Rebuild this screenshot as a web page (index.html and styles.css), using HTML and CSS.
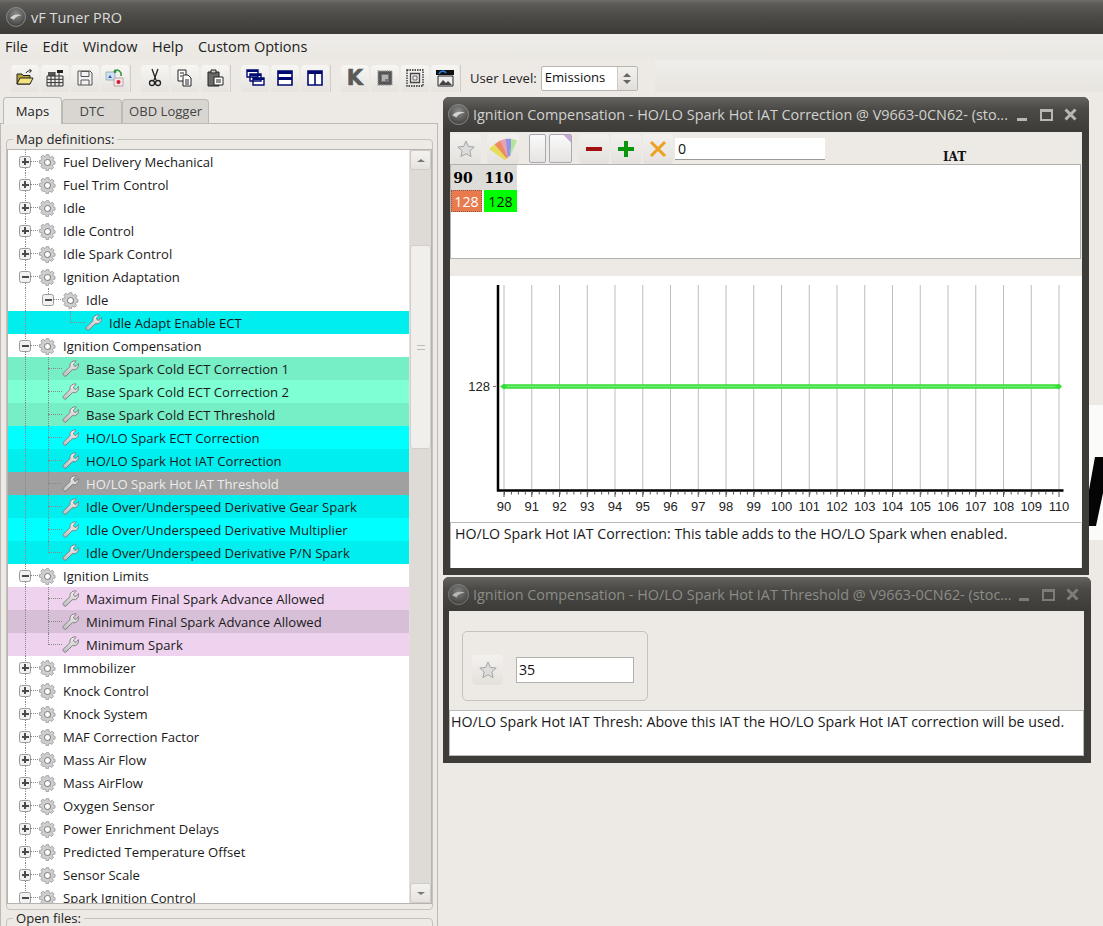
FILE: index.html
```html
<!DOCTYPE html>
<html lang="en">
<head>
<meta charset="utf-8">
<title>vF Tuner PRO</title>
<link rel="stylesheet" href="styles.css">
</head>
<body>
<svg class="defs" width="0" height="0" aria-hidden="true">
  <defs>
    <radialGradient id="lg" cx="50%" cy="35%" r="70%"><stop offset="0" stop-color="#8d8d8b"/><stop offset="1" stop-color="#3a3a38"/></radialGradient>
    <linearGradient id="wg" x1="0" y1="0" x2="0" y2="1"><stop offset="0" stop-color="#f2f2f2"/><stop offset="1" stop-color="#bdbdbd"/></linearGradient>
    <symbol id="logo" viewBox="0 0 20 20"><circle cx="10" cy="10" r="9.5" fill="url(#lg)" stroke="#9a9a98" stroke-width=".8"/><path d="M4 11 C7 7 12 7 16 8 C12 9 9 10 8 13 C7 12 5 11 4 11Z" fill="#d4d4d2"/></symbol>
    <symbol id="gear" viewBox="0 0 18 18"><path d="M7.6 1h2.8l.4 2.2 1.3.6 1.9-1.2 2 2-1.2 1.9.6 1.3L17 8.2v2.8l-2.2.4-.6 1.3 1.2 1.9-2 2-1.9-1.2-1.3.6-.4 2.2H7.6l-.4-2.2-1.3-.6L4 15.6l-2-2 1.2-1.9-.6-1.3L.4 10V7.2l2.2-.4.6-1.3L2 3.6l2-2 1.9 1.2 1.3-.6z" transform="translate(0 -.3)" fill="#cfcfcf" stroke="#949494" stroke-width=".8"/><circle cx="9" cy="9" r="3.2" fill="#fff" stroke="#8c8c8c" stroke-width="1.2"/></symbol>
    <symbol id="wrench" viewBox="0 0 17 17"><path d="M1.2 13.2 8 6.7C7.5 4 9 1.6 11.8 1c.9-.2 1.8-.1 2.5.2L11.400 4l.8 1.900 1.900.5 2.400-2.900c.5 2.500-.5 5-2.900 6-1 .4-2.100.4-3.100.1l-6.500 6.400c-1.200 1.100-3.800-1.400-2.800-2.800z" fill="url(#wg)" stroke="#7b7b7b" stroke-width=".9"/></symbol>
    <symbol id="star" viewBox="0 0 20 20"><path d="M10 2l2.400 5.400 5.800.6-4.400 3.900 1.300 5.700L10 14.700l-5.100 2.900 1.300-5.700L1.800 8l5.800-.6z" fill="#dcdcdc" stroke="#a5a5a5" stroke-width="1"/></symbol>
  </defs>
</svg>

<header class="titlebar">
  <svg class="app-logo"><use href="#logo"/></svg>
  <span>vF Tuner PRO</span>
</header>

<nav class="menubar">
  <span>File</span><span>Edit</span><span>Window</span><span>Help</span><span>Custom Options</span>
</nav>

<div class="toolbar">
  <div class="tb-group">
    <button class="tb"><svg viewBox="0 0 20 20"><path d="M2 6h5l1 1.500h7V16H2z" fill="#b9a43a" stroke="#222" stroke-width="1"/><path d="M2 16 5 10h13l-3 6z" fill="#f3e37c" stroke="#222" stroke-width="1"/><path d="M11 5c1-2 3-2.500 5-2M14.500 1l2 2-2 1.500" fill="none" stroke="#222" stroke-width="1"/></svg></button>
    <button class="tb"><svg viewBox="0 0 20 20"><path d="M12 2h6v3h-6z" fill="#222"/><path d="M3 4h7v4H3z" fill="#555"/><path d="M2 8h16v10H2zM2 11.300h16M2 14.600h16M6 8v10M10 4v14M14 5v13" fill="none" stroke="#333" stroke-width="1"/></svg></button>
    <button class="tb"><svg viewBox="0 0 20 20"><path d="M3 3h12l2 2v12H3z" fill="#f2f2f2" stroke="#555" stroke-width="1"/><path d="M6 3.500h8v5H6zM6 17v-5h8v5" fill="none" stroke="#555" stroke-width="1"/></svg></button>
    <button class="tb"><svg viewBox="0 0 20 20"><path d="M1 4h9v8H1z" fill="#cfe0f5" stroke="#8aa" stroke-width=".8"/><path d="M3 10l2-3 2 3z" fill="#2b5fb0"/><path d="M9 10h9v8H9z" fill="#f5e6ea" stroke="#a99" stroke-width=".8"/><circle cx="13.500" cy="14" r="2" fill="#d01c2c"/><path d="M9 4c1-2.500 5-3 7 1v3" fill="none" stroke="#2f8f3a" stroke-width="1.500"/><path d="M9 1.500v4l3-1.500z" fill="#2f8f3a"/></svg></button>
  </div>
  <div class="tb-group short">
    <button class="tb"><svg viewBox="0 0 20 20"><path d="M7 1l4 11M13 1L9 12" stroke="#222" stroke-width="1.300" fill="none"/><circle cx="7" cy="15" r="2.500" fill="none" stroke="#222" stroke-width="1.300"/><circle cx="13" cy="15" r="2.500" fill="none" stroke="#222" stroke-width="1.300"/></svg></button>
    <button class="tb"><svg viewBox="0 0 20 20"><path d="M3 2h8v11H3z" fill="#fff" stroke="#222"/><path d="M8 7h5l3 3v8H8z" fill="#fff" stroke="#222"/><path d="M5 5h4M5 8h2M10 12h4M10 14h4M10 16h4" stroke="#222"/></svg></button>
    <button class="tb"><svg viewBox="0 0 20 20"><path d="M3 4h11v14H3z" fill="#6b6b66" stroke="#222"/><path d="M6 2h5v3H6z" fill="#ccc" stroke="#222"/><path d="M9 9h9v8H9z" fill="#fff" stroke="#222"/><path d="M11 12h5M11 14h5" stroke="#222"/></svg></button>
  </div>
  <div class="tb-group short">
    <button class="tb"><svg viewBox="0 0 20 20"><path d="M2 2h11v7H2zM5 6h11v7H5zM8 10h11v7H8z" fill="#fff" stroke="#000a70" stroke-width="1.400"/><path d="M2 2h11v2H2zM5 6h11v2H5zM8 10h11v2H8z" fill="#000a70"/></svg></button>
    <button class="tb"><svg viewBox="0 0 20 20"><path d="M3 3h14v14H3z" fill="#fff" stroke="#000a70" stroke-width="1.600"/><path d="M3 3h14v3H3zM3 9h14v3H3z" fill="#000a70"/></svg></button>
    <button class="tb"><svg viewBox="0 0 20 20"><path d="M3 3h14v14H3zM10 3v14" fill="#fff" stroke="#000a70" stroke-width="1.600"/><path d="M3 3h14v3H3z" fill="#000a70"/></svg></button>
  </div>
  <div class="tb-group">
    <button class="tb"><span class="k-glyph">K</span></button>
    <button class="tb"><svg viewBox="0 0 20 20"><path d="M3 3h14v14H3z" fill="#555" stroke="#999" stroke-width="1.400" stroke-dasharray="1 .8"/><path d="M6 6h8v8H6z" fill="#777"/><path d="M7 8h6M7 10h6M7 12h3" stroke="#eee"/></svg></button>
    <button class="tb"><svg viewBox="0 0 20 20"><path d="M2 2h16v16H2z" fill="none" stroke="#222" stroke-width="1.300" stroke-dasharray="1.500 1"/><path d="M5.500 5.500h9v9h-9z" fill="#eee" stroke="#444" stroke-width="1.300"/><path d="M8 8h4v4H8z" fill="none" stroke="#666"/></svg></button>
    <button class="tb"><svg viewBox="0 0 20 20"><path d="M1 2h18v5H1z" fill="#111"/><path d="M3 8h15v10H3z" fill="#eee" stroke="#222"/><path d="M4 17l4-5 3 3 2-2 4 4z" fill="#444"/><path d="M4 6c1-3 5-4 7-1" fill="none" stroke="#2a7fdc" stroke-width="1.600"/></svg></button>
  </div>
  <span class="level-label">User Level:</span>
  <div class="combo"><span class="combo-text">Emissions</span><span class="spin"><i class="up"></i><i class="down"></i></span></div>
  <div class="toolbar-rest"></div>
</div>

<main class="main">
  <aside class="left">
    <div class="tabs">
      <div class="tab active">Maps</div>
      <div class="tab">DTC</div>
      <div class="tab">OBD Logger</div>
    </div>
    <div class="pane">
      <section class="group">
        <div class="legend">Map definitions:</div>
        <div class="tree-box">
          <div class="tree">
            <div class="row"><span class="exp plus"></span><svg class="gear"><use href="#gear"/></svg><span>Fuel Delivery Mechanical</span></div>
            <div class="row"><span class="exp plus"></span><svg class="gear"><use href="#gear"/></svg><span>Fuel Trim Control</span></div>
            <div class="row"><span class="exp plus"></span><svg class="gear"><use href="#gear"/></svg><span>Idle</span></div>
            <div class="row"><span class="exp plus"></span><svg class="gear"><use href="#gear"/></svg><span>Idle Control</span></div>
            <div class="row"><span class="exp plus"></span><svg class="gear"><use href="#gear"/></svg><span>Idle Spark Control</span></div>
            <div class="row"><span class="exp minus"></span><svg class="gear"><use href="#gear"/></svg><span>Ignition Adaptation</span></div>
            <div class="row sub c last"><span class="exp minus"></span><svg class="gear"><use href="#gear"/></svg><span>Idle</span></div>
            <div class="row leaf2 cyan-d"><span class="wr"><svg><use href="#wrench"/></svg></span><span>Idle Adapt Enable ECT</span></div>
            <div class="row"><span class="exp minus"></span><svg class="gear"><use href="#gear"/></svg><span>Ignition Compensation</span></div>
            <div class="row leaf c aqua-d"><span class="wr"><svg><use href="#wrench"/></svg></span><span>Base Spark Cold ECT Correction 1</span></div>
            <div class="row leaf c aqua"><span class="wr"><svg><use href="#wrench"/></svg></span><span>Base Spark Cold ECT Correction 2</span></div>
            <div class="row leaf c aqua-d"><span class="wr"><svg><use href="#wrench"/></svg></span><span>Base Spark Cold ECT Threshold</span></div>
            <div class="row leaf c cyan"><span class="wr"><svg><use href="#wrench"/></svg></span><span>HO/LO Spark ECT Correction</span></div>
            <div class="row leaf c cyan-d"><span class="wr"><svg><use href="#wrench"/></svg></span><span>HO/LO Spark Hot IAT Correction</span></div>
            <div class="row leaf c selected"><span class="wr"><svg><use href="#wrench"/></svg></span><span>HO/LO Spark Hot IAT Threshold</span></div>
            <div class="row leaf c cyan-d"><span class="wr"><svg><use href="#wrench"/></svg></span><span>Idle Over/Underspeed Derivative Gear Spark</span></div>
            <div class="row leaf c cyan"><span class="wr"><svg><use href="#wrench"/></svg></span><span>Idle Over/Underspeed Derivative Multiplier</span></div>
            <div class="row leaf c last cyan-d"><span class="wr"><svg><use href="#wrench"/></svg></span><span>Idle Over/Underspeed Derivative P/N Spark</span></div>
            <div class="row"><span class="exp minus"></span><svg class="gear"><use href="#gear"/></svg><span>Ignition Limits</span></div>
            <div class="row leaf c thistle"><span class="wr"><svg><use href="#wrench"/></svg></span><span>Maximum Final Spark Advance Allowed</span></div>
            <div class="row leaf c thistle-d"><span class="wr"><svg><use href="#wrench"/></svg></span><span>Minimum Final Spark Advance Allowed</span></div>
            <div class="row leaf c last thistle"><span class="wr"><svg><use href="#wrench"/></svg></span><span>Minimum Spark</span></div>
            <div class="row"><span class="exp plus"></span><svg class="gear"><use href="#gear"/></svg><span>Immobilizer</span></div>
            <div class="row"><span class="exp plus"></span><svg class="gear"><use href="#gear"/></svg><span>Knock Control</span></div>
            <div class="row"><span class="exp plus"></span><svg class="gear"><use href="#gear"/></svg><span>Knock System</span></div>
            <div class="row"><span class="exp plus"></span><svg class="gear"><use href="#gear"/></svg><span>MAF Correction Factor</span></div>
            <div class="row"><span class="exp plus"></span><svg class="gear"><use href="#gear"/></svg><span>Mass Air Flow</span></div>
            <div class="row"><span class="exp plus"></span><svg class="gear"><use href="#gear"/></svg><span>Mass AirFlow</span></div>
            <div class="row"><span class="exp plus"></span><svg class="gear"><use href="#gear"/></svg><span>Oxygen Sensor</span></div>
            <div class="row"><span class="exp plus"></span><svg class="gear"><use href="#gear"/></svg><span>Power Enrichment Delays</span></div>
            <div class="row"><span class="exp plus"></span><svg class="gear"><use href="#gear"/></svg><span>Predicted Temperature Offset</span></div>
            <div class="row"><span class="exp plus"></span><svg class="gear"><use href="#gear"/></svg><span>Sensor Scale</span></div>
            <div class="row"><span class="exp minus"></span><svg class="gear"><use href="#gear"/></svg><span>Spark Ignition Control</span></div>
          </div>
          <div class="scrollbar">
            <div class="sb-btn"><i class="sb-up"></i></div>
            <div class="sb-track">
              <div class="sb-handle"><i class="grip"></i></div>
            </div>
            <div class="sb-btn"><i class="sb-down"></i></div>
          </div>
        </div>
      </section>
      <section class="group open">
        <div class="legend">Open files:</div>
      </section>
    </div>
  </aside>

  <div class="mdi">
    <div class="wallpaper"><svg viewBox="0 0 14 135" preserveAspectRatio="none"><path d="M6 52H14V88L7 121H0V85z" fill="#050505"/></svg></div>

    <article class="win win-a">
      <header class="win-title">
        <svg class="win-logo"><use href="#logo"/></svg>
        <span class="win-name">Ignition Compensation - HO/LO Spark Hot IAT Correction @ V9663-0CN62- (sto...</span>
        <span class="ctl"><i class="c-min"></i><i class="c-max"></i><svg class="c-close" viewBox="0 0 13 13"><path d="M1.500 1.500l10 10M11.500 1.500l-10 10" stroke="currentColor" stroke-width="3"/></svg></span>
      </header>
      <div class="win-body">
        <div class="tt-bar">
          <button class="tt-btn"><svg><use href="#star"/></svg></button>
          <button class="tt-btn palette"><svg viewBox="0 0 32 26"><path d="M1 13l6-5 16 12-5 5z" fill="#e6dc5c"/><path d="M7 8l6-4 10 16-3 3z" fill="#ee8a5e"/><path d="M13 4l6-2 5 18-3 2z" fill="#e8a0b8"/><path d="M19 2h6l-1 18-3 1z" fill="#8d96e0"/><path d="M25 2l6 2-7 16z" fill="#b7e39a"/></svg></button>
          <span class="page blank"></span>
          <span class="page fold"></span>
          <button class="tt-btn wide"><svg viewBox="0 0 20 20"><path d="M2 8h16v4H2z" fill="#a01010"/></svg></button>
          <button class="tt-btn wide"><svg viewBox="0 0 20 20"><path d="M8 2h4v6h6v4h-6v6H8v-6H2V8h6z" fill="#0a960a"/></svg></button>
          <button class="tt-btn wide"><svg viewBox="0 0 20 20"><path d="M3 3l14 14M17 3L3 17" stroke="#eea020" stroke-width="3"/></svg></button>
          <span class="tt-input">0</span>
          <span class="axis-name">IAT</span>
        </div>
        <div class="table-box">
          <div class="t-row">
            <span class="th th-a">90</span><span class="th th-b">110</span>
          </div>
          <div class="t-row">
            <span class="td td-a">128</span><span class="td td-b">128</span>
          </div>
        </div>
        <div class="plot">
          <svg viewBox="450 276 632 246" class="plot-svg">
            <g class="grid">
              <path d="M504 285V489M531.750 285V489M559.500 285V489M587.250 285V489M615 285V489M642.750 285V489M670.500 285V489M698.250 285V489M726 285V489M753.750 285V489M781.500 285V489M809.250 285V489M837 285V489M864.750 285V489M892.500 285V489M920.250 285V489M948 285V489M975.750 285V489M1003.500 285V489M1031.250 285V489M1059 285V489"/>
            </g>
            <path class="axis" d="M498 285V490.500H1063.500"/>
            <path class="tick-minor" d="M504 493H1059"/>
            <path class="tick-major" d="M504 491V497M531.750 491V497M559.500 491V497M587.250 491V497M615 491V497M642.750 491V497M670.500 491V497M698.250 491V497M726 491V497M753.750 491V497M781.500 491V497M809.250 491V497M837 491V497M864.750 491V497M892.500 491V497M920.250 491V497M948 491V497M975.750 491V497M1003.500 491V497M1031.250 491V497M1059 491V497"/>
            <path class="tick-y" d="M493 386.500H496"/>
            <path class="series-glow" d="M504 386.500H1059"/>
            <path class="series" d="M504 386.500H1059"/>
            <path class="marker" d="M500 386.500l4-3 3 3-3 3zM1055 386.500l4-3 3 3-3 3z"/>
            <text class="y-label" x="490" y="391">128</text>
            <g class="x-labels">
              <text x="504" y="511">90</text><text x="531.750" y="511">91</text><text x="559.500" y="511">92</text><text x="587.250" y="511">93</text><text x="615" y="511">94</text><text x="642.750" y="511">95</text><text x="670.500" y="511">96</text><text x="698.250" y="511">97</text><text x="726" y="511">98</text><text x="753.750" y="511">99</text><text x="781.500" y="511">100</text><text x="809.250" y="511">101</text><text x="837" y="511">102</text><text x="864.750" y="511">103</text><text x="892.500" y="511">104</text><text x="920.250" y="511">105</text><text x="948" y="511">106</text><text x="975.750" y="511">107</text><text x="1003.500" y="511">108</text><text x="1031.250" y="511">109</text><text x="1059" y="511">110</text>
            </g>
          </svg>
        </div>
        <div class="desc desc-a">HO/LO Spark Hot IAT Correction: This table adds to the HO/LO Spark when enabled.</div>
      </div>
    </article>

    <article class="win win-b">
      <header class="win-title">
        <svg class="win-logo"><use href="#logo"/></svg>
        <span class="win-name">Ignition Compensation - HO/LO Spark Hot IAT Threshold @ V9663-0CN62- (stoc...</span>
        <span class="ctl"><i class="c-min"></i><i class="c-max"></i><svg class="c-close" viewBox="0 0 13 13"><path d="M1.500 1.500l10 10M11.500 1.500l-10 10" stroke="currentColor" stroke-width="3"/></svg></span>
      </header>
      <div class="win-body">
        <div class="value-group">
          <button class="tt-btn"><svg><use href="#star"/></svg></button>
          <span class="value-input">35</span>
        </div>
        <div class="desc desc-b">HO/LO Spark Hot IAT Thresh: Above this IAT the HO/LO Spark Hot IAT correction will be used.</div>
      </div>
    </article>
  </div>
</main>
</body>
</html>
```

FILE: styles.css
```css
* { box-sizing: border-box; }
html, body { margin: 0; height: 926px; overflow: hidden; }
body {
  background: #edeae6;
  color: #111;
  font-family: "Open Sans", "Noto Sans", sans-serif;
  font-size: 13.1px;
  display: flex;
  flex-direction: column;
}
.defs { position: absolute; }
i { display: block; }

/* title + menu */
.titlebar {
  height: 34px;
  flex: none;
  display: flex;
  align-items: center;
  gap: 5px;
  padding-left: 6px;
  background: linear-gradient(#6f6e6a 0, #5d5c58 10%, #4a4945 50%, #3c3b37 100%);
  color: #dcdcda;
  font-size: 14.5px;
}
.app-logo { width: 20px; height: 20px; }
.menubar {
  height: 25px;
  flex: none;
  display: flex;
  align-items: center;
  gap: 14.5px;
  padding-left: 5px;
  font-size: 14.5px;
  color: #222;
  background: linear-gradient(#efedea, #ebe8e3);
}

/* main toolbar */
.toolbar {
  height: 33px;
  flex: none;
  display: flex;
  align-items: center;
  padding-left: 11px;
  padding-top: 5px;
  background: #edeae6;
}
.tb-group {
  display: flex;
  gap: 2px;
  padding-right: 1px;
  margin-right: 10px;
  border-right: 1px solid #cfccc8;
}
.tb {
  width: 28px;
  height: 27px;
  padding: 3px 4px;
  border: 0;
  border-radius: 4px 4px 0 0;
  background: linear-gradient(#f7f6f3, #e6e3df);
  display: flex;
  align-items: center;
  justify-content: center;
}
.tb svg { width: 20px; height: 20px; }
.k-glyph {
  font: 900 21px "DejaVu Sans", sans-serif;
  color: #5a5a5a;
  -webkit-text-stroke: .6px #5a5a5a;
  line-height: 1;
}
.level-label { margin-left: -1px; color: #222; }
.combo {
  margin-left: 4px;
  width: 97px;
  height: 25px;
  display: flex;
  background: #fff;
  border: 1px solid #b9b6b1;
  border-radius: 2px;
}
.combo-text { flex: 1; padding-left: 3px; line-height: 21px; }
.spin {
  width: 20px;
  background: linear-gradient(#f3f1ee, #e2dfda);
  border-left: 1px solid #cfccc8;
  display: flex;
  flex-direction: column;
  align-items: center;
  justify-content: center;
  gap: 3px;
}
.up { border: 4px solid transparent; border-top: 0; border-bottom: 4px solid #666; }
.down { border: 4px solid transparent; border-bottom: 0; border-top: 4px solid #666; }
.toolbar-rest {
  flex: 1;
  margin: -5px 0 0 17px;
  height: 32px;
  background: linear-gradient(#f0eeea, #e8e5e0);
}

/* main area */
.main { flex: 1; display: flex; min-height: 0; overflow: hidden; }
.left { width: 438px; flex: none; padding-top: 5px; }
.tabs { display: flex; height: 26px; padding-left: 3px; align-items: flex-end; }
.tab {
  height: 24px;
  padding: 0 6px;
  width: 60px;
  text-align: center;
  line-height: 23px;
  background: #d9d6d2;
  color: #444;
  border: 1px solid #bdbab6;
  border-bottom: 0;
  border-radius: 4px 4px 0 0;
  white-space: nowrap;
}
.tab:nth-child(3) { width: 87px; }
.tab.active {
  height: 27px;
  width: 59px;
  margin-bottom: -1px;
  background: #f0eeea;
  color: #222;
  line-height: 26px;
  position: relative;
}
.pane {
  height: 900px;
  border: 1px solid #bdbab6;
  padding: 15px 4px 0 5px;
}
.group {
  position: relative;
  border: 1px solid #c5c2bd;
  border-radius: 4px;
  padding-top: 9px;
  height: 771px;
}
.group.open { margin-top: 8px; }
.legend {
  position: absolute;
  left: 6px;
  top: -8px;
  padding: 0 3px;
  height: 15px;
  line-height: 15px;
  background: #edeae6;
  color: #222;
}
.tree-box {
  display: flex;
  width: 425px;
  height: 755px;
  border: 1px solid #b7b4af;
  background: #fff;
}
.tree { width: 401px; flex: none; overflow: hidden; }
.row {
  position: relative;
  height: 23px;
  display: flex;
  align-items: center;
  padding-left: 11px;
  white-space: nowrap;
  color: #1a1a1a;
}
.row::before {
  content: "";
  position: absolute;
  left: 17px;
  top: 0;
  bottom: 0;
  border-left: 1px dotted #888;
}
.row.c::after {
  content: "";
  position: absolute;
  left: 40px;
  top: 0;
  bottom: 0;
  border-left: 1px dotted #888;
}
.row.c.last::after { bottom: 50%; }
.row.leaf { padding-left: 54px; }
.row.sub { padding-left: 34px; }
.row.leaf2 { padding-left: 77px; }
.row.leaf2::after {
  content: "";
  position: absolute;
  left: 62px;
  top: 0;
  bottom: 50%;
  border-left: 1px dotted #888;
}
.exp {
  position: relative;
  z-index: 1;
  width: 12px;
  height: 12px;
  flex: none;
  border: 1.5px solid #9b9b9b;
  border-radius: 2.5px;
  background-color: #f1f1f1;
  background-repeat: no-repeat;
  margin-right: 8px;
}
.exp::after {
  content: "";
  position: absolute;
  left: 10px;
  top: 4px;
  width: 8px;
  border-top: 1px dotted #888;
}
.exp.minus {
  background-image: linear-gradient(#4a4a4a, #4a4a4a);
  background-size: 7px 2px;
  background-position: center;
}
.exp.plus {
  background-image: linear-gradient(#4a4a4a, #4a4a4a), linear-gradient(#4a4a4a, #4a4a4a);
  background-size: 7px 2px, 2px 7px;
  background-position: center, center;
}
.gear { width: 17px; height: 17px; flex: none; margin-right: 7px; position: relative; top: .5px; }
.wr { position: relative; display: block; width: 17px; height: 17px; margin-right: 7px; flex: none; }
.wr svg { width: 17px; height: 17px; display: block; position: relative; }
.wr::before {
  content: "";
  position: absolute;
  left: -14px;
  top: 8px;
  width: 14px;
  border-top: 1px dotted #888;
}
.cyan { background: #00ffff; }
.cyan-d { background: #00eeee; }
.aqua { background: #7fffd4; }
.aqua-d { background: #76eec6; }
.thistle { background: #eed2ee; }
.thistle-d { background: #d8bfd8; }
.selected { background: #a0a0a0; color: #ececec; }

.scrollbar {
  flex: 1;
  border-left: 1px solid #e2dfda;
  background: #dedbd7;
  display: flex;
  flex-direction: column;
}
.sb-btn {
  height: 20px;
  flex: none;
  background: linear-gradient(#f4f2ef, #e6e3df);
  border: 1px solid #cfccc8;
  border-radius: 3px;
  display: flex;
  align-items: center;
  justify-content: center;
}
.sb-up { border: 4px solid transparent; border-top: 0; border-bottom: 3px solid #777; }
.sb-down { border: 4px solid transparent; border-bottom: 0; border-top: 3px solid #777; }
.sb-track { flex: 1; padding-top: 75px; }
.sb-handle {
  height: 204px;
  background: #f1efec;
  border: 1px solid #d3d0cb;
  border-radius: 3px;
  display: flex;
  align-items: center;
  justify-content: center;
}
.grip { width: 8px; height: 5px; border-top: 1px solid #bbb; border-bottom: 1px solid #bbb; }

/* MDI */
.mdi { flex: 1; position: relative; }
.wallpaper {
  position: absolute;
  left: 651px;
  top: 313px;
  width: 14px;
  height: 135px;
  background: #fbfbfa;
}
.wallpaper svg { width: 14px; height: 135px; display: block; }
.win {
  position: absolute;
  left: 5px;
  padding: 0 7px 7px;
  background: #3d3c38;
  border-radius: 6px 6px 0 0;
  display: flex;
  flex-direction: column;
}
.win-a { top: 5px; width: 646px; height: 478px; }
.win-b { top: 485px; width: 648px; height: 186px; padding-left: 6px; }
.win-title {
  height: 35px;
  flex: none;
  margin: 0 -7px;
  padding: 0 12px 0 5px;
  display: flex;
  align-items: center;
  gap: 4px;
  background: linear-gradient(#64635f, #4b4a46 35%, #3c3b37);
  border-radius: 6px 6px 0 0;
  color: #d2d2d0;
  font-size: 14.4px;
  white-space: nowrap;
}
.win-b .win-title { height: 34px; color: #8c8c88; margin: 0 -7px 0 -6px; }
.win-b .win-logo { opacity: .8; }
.win-logo { width: 21px; height: 21px; flex: none; }
.win-name { flex: none; }
.ctl { flex: none; margin-left: auto; display: flex; align-items: flex-end; color: #b8b8b3; }
.win-b .ctl { color: #7c7c78; }
.c-min { width: 10px; height: 3px; background: currentColor; margin-right: 13px; flex: none; }
.c-max { width: 13px; height: 12px; margin-right: 11px; flex: none; border: 2px solid currentColor; border-top-width: 3px; }
.c-close { width: 13px; height: 13px; display: block; flex: none; }

.win-body {
  flex: 1;
  display: flex;
  flex-direction: column;
  background: #edeae6;
  min-height: 0;
}
.tt-bar {
  height: 32px;
  flex: none;
  display: flex;
  align-items: flex-start;
  padding-top: 2px;
}
.tt-btn {
  width: 31px;
  height: 30px;
  padding: 5px;
  flex: none;
  border: 0;
  border-radius: 4px;
  background: linear-gradient(#f3f1ee, #e4e1dd);
  display: flex;
  align-items: center;
  justify-content: center;
}
.tt-btn svg { width: 20px; height: 20px; display: block; }
.tt-btn.palette { margin-left: 6px; width: 32px; padding: 1px; }
.tt-btn.palette svg { width: 30px; height: 26px; }
.tt-btn.wide { width: 30px; margin-left: 2px; }
.page {
  height: 29px;
  border: 1px solid #aaa9b3;
  border-radius: 2px;
  background: linear-gradient(#fafafa, #e6e4e2);
}
.blank { width: 17px; margin-left: 10px; }
.fold {
  width: 23px;
  margin: 0 5px 0 3px;
  background:
    linear-gradient(225deg, #c9a8d8 0 5px, transparent 5px),
    linear-gradient(#fafafa, #e6e4e2);
}
.tt-input {
  width: 150px;
  height: 22px;
  margin: 4px 0 0 2px;
  background: #fff;
  padding-left: 3px;
  font-size: 14.2px;
  line-height: 22px;
  border-bottom: 1px solid #999;
}
.axis-name {
  margin: 16px 0 0 118px;
  font: bold 12px "DejaVu Serif", serif;
}
.table-box {
  height: 95px;
  flex: none;
  background: #fff;
  border: 1px solid #b3b1ad;
  margin-right: 1px;
}
.t-row { display: flex; }
.th {
  height: 25px;
  background: #dedcd9;
  font: bold 14px/26px "DejaVu Serif", serif;
  text-align: center;
  color: #000;
}
.th-a { width: 32px; padding-right: 8px; }
.th-b { width: 34px; padding-right: 2px; }
.td { height: 22px; font-size: 14.2px; line-height: 24px; text-align: center; }
.td-a { width: 31px; margin-right: 2px; background: #e87a4e; color: #fff; outline: 1px dotted #8a5a4a; outline-offset: -1px; }
.td-b { width: 33px; background: #00ff00; color: #111; }
.plot {
  height: 246px;
  flex: none;
  margin-top: 17px;
  background: #fff;
}
.plot-svg { width: 632px; height: 246px; display: block; }
.grid path { stroke: #bdbdbd; stroke-width: 1; fill: none; }
.axis { stroke: #000; stroke-width: 2.5; fill: none; }
.tick-minor { stroke: #555; stroke-width: 3; stroke-dasharray: 1 5.94; fill: none; }
.tick-major { stroke: #555; stroke-width: 1; fill: none; }
.tick-y { stroke: #a06a6a; stroke-width: 1; fill: none; }
.series-glow { stroke: #35dd35; stroke-width: 4.5; fill: none; }
.series { stroke: #72ee72; stroke-width: 1.5; fill: none; }
.marker { fill: #35dd35; }
.plot-svg text { font: 13px "Liberation Sans", Arial, sans-serif; fill: #222; }
.y-label { text-anchor: end; }
.x-labels text { text-anchor: middle; }
.desc {
  background: #fff;
  border: 1px solid #bcbab6;
  font-size: 14.2px;
  color: #1a1a1a;
  white-space: nowrap;
}
.desc-a { height: 46px; padding: 1px 0 0 4px; margin-right: 1px; line-height: 20px; border-bottom: 0; border-right: 0; }
.desc-b { height: 46px; padding: 1px 0 0 1px; margin-top: 9px; line-height: 20px; }
.value-group {
  margin: 20px 0 0 13px;
  width: 186px;
  height: 70px;
  flex: none;
  border: 1px solid #c5c2bd;
  border-radius: 5px;
  display: flex;
  align-items: center;
  padding: 7px 0 0 9px;
  gap: 13px;
}
.value-input {
  width: 118px;
  height: 26px;
  background: #fff;
  border: 1px solid #b3b1ad;
  padding-left: 2px;
  line-height: 24px;
  font-size: 14.2px;
}
```
